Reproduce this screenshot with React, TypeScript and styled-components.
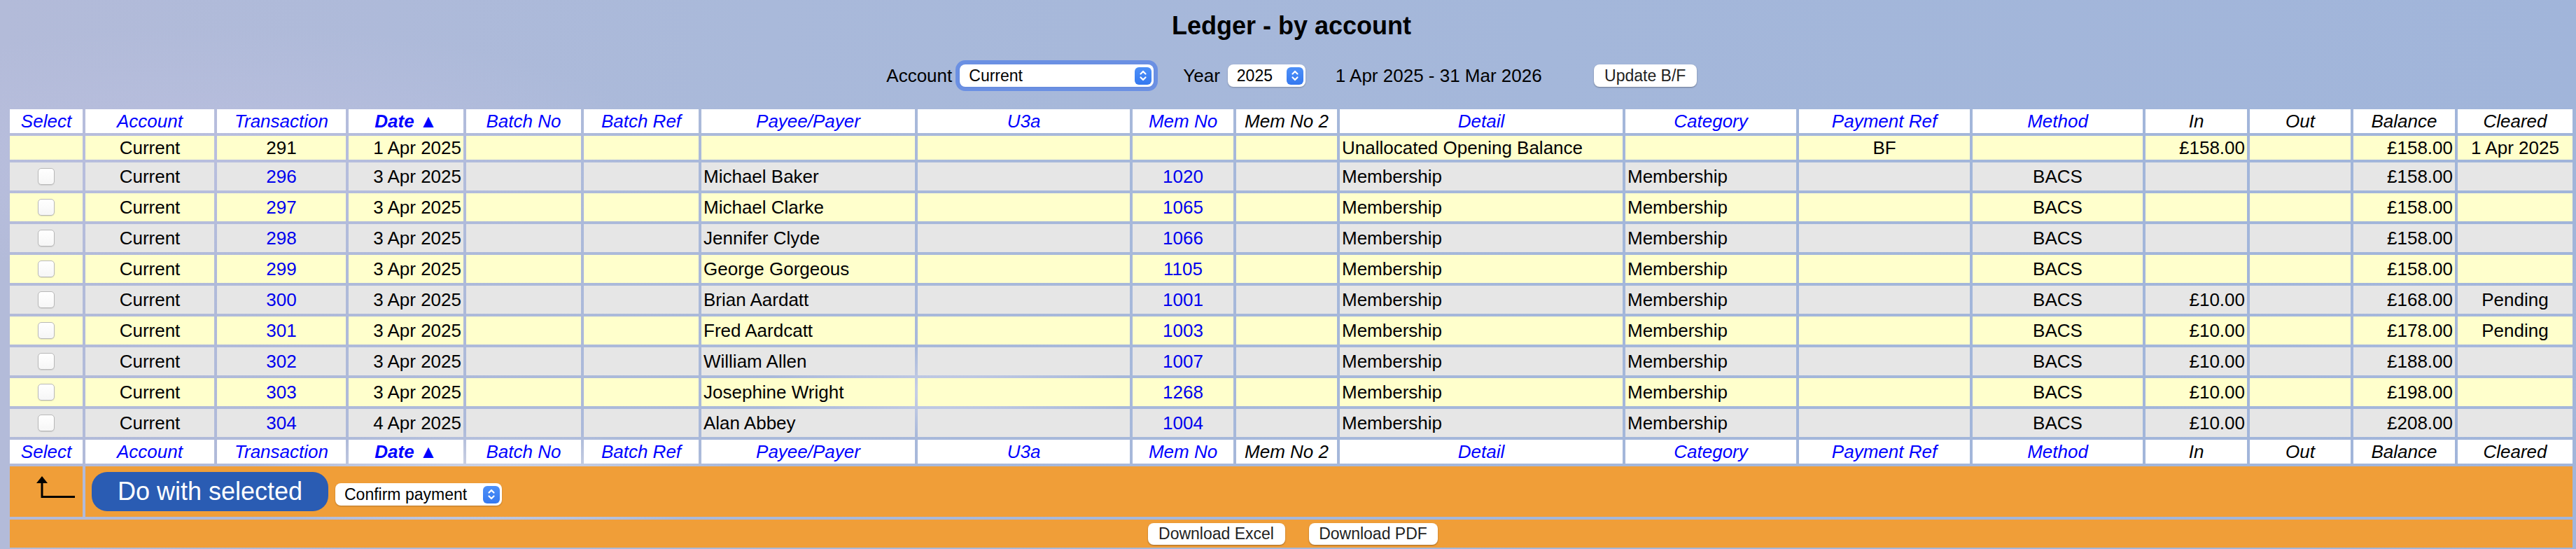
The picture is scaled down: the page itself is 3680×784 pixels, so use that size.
import React from "react";
import styled, { createGlobalStyle } from "styled-components";

const GlobalStyle = createGlobalStyle`
  html, body { margin: 0; padding: 0; }
  body {
    width: 3680px;
    height: 784px;
    overflow: hidden;
    font-family: "Liberation Sans", Arial, Helvetica, sans-serif;
    color: #000;
    background:
      radial-gradient(ellipse 520px 110px at 700px 690px, rgba(255, 248, 244, 0.55), rgba(255,255,255,0) 70%),
      radial-gradient(ellipse 380px 90px at 1350px 560px, rgba(235, 232, 245, 0.5), rgba(255,255,255,0) 70%),
      radial-gradient(ellipse 900px 260px at 320px 220px, rgba(192, 194, 226, 0.55), rgba(255,255,255,0) 70%),
      radial-gradient(ellipse 600px 200px at 3500px 500px, rgba(170, 186, 222, 0.6), rgba(255,255,255,0) 70%),
      linear-gradient(90deg, #b3bbd9 0%, #a9b9da 30%, #a4b7da 60%, #a1b5da 100%);
  }
`;

const Page = styled.div`
  padding: 16px 0 0 10px;
  width: 3670px;
`;

const Title = styled.h1`
  margin: 0;
  height: 42px;
  line-height: 42px;
  font-size: 36px;
  font-weight: bold;
  text-align: center;
`;

const Controls = styled.div`
  margin-top: 28px;
  height: 44px;
  display: flex;
  align-items: center;
  justify-content: center;
  font-size: 26px;
`;

const Label = styled.span<{ $gapAfter: number; $gapBefore?: number }>`
  margin-right: ${(p) => p.$gapAfter}px;
  margin-left: ${(p) => p.$gapBefore ?? 0}px;
  white-space: nowrap;
`;

const SelectBox = styled.div<{ $w: number; $focus?: boolean; $drop?: number }>`
  display: inline-flex;
  align-items: center;
  box-sizing: border-box;
  width: ${(p) => p.$w}px;
  height: 32px;
  margin-top: ${(p) => p.$drop ?? 0}px;
  padding: 0 3px 0 13px;
  background: #fff;
  border-radius: 8px;
  box-shadow: ${(p) =>
    p.$focus
      ? "0 0 0 6px rgba(96, 136, 228, 0.85), 0 1px 2px rgba(0,0,0,0.25)"
      : "0 1px 2px rgba(0,0,0,0.25)"};
`;

const NativeSelect = styled.select`
  appearance: none;
  -webkit-appearance: none;
  flex: 1;
  min-width: 0;
  border: none;
  outline: none;
  background: transparent;
  padding: 0;
  margin: 0;
  font-family: "Liberation Sans", Arial, sans-serif;
  font-size: 23px;
  color: #000;
`;

const Stepper = styled.span`
  flex: none;
  width: 24px;
  height: 25px;
  border-radius: 6px;
  background: linear-gradient(#4d90f8, #3478f0);
  display: flex;
  align-items: center;
  justify-content: center;
`;

const PlainButton = styled.button<{ $w: number; $h?: number }>`
  box-sizing: border-box;
  width: ${(p) => p.$w}px;
  height: ${(p) => p.$h ?? 32}px;
  padding: 0;
  border: none;
  border-radius: 8px;
  background: #fff;
  color: #222;
  font-family: "Liberation Sans", Arial, sans-serif;
  font-size: 23px;
  box-shadow: 0 1px 2px rgba(0, 0, 0, 0.35);
`;

const Table = styled.table`
  margin-top: 22px;
  border-collapse: separate;
  border-spacing: 4px;
  table-layout: fixed;
  width: 3669px;
  font-size: 26px;
`;

type Tone = "white" | "yellow" | "gray" | "orange";
const toneColor: Record<Tone, string> = {
  white: "#ffffff",
  yellow: "#ffffcc",
  gray: "#e6e6e6",
  orange: "#f09e38",
};

const Row = styled.tr<{ $tone: Tone; $h: number }>`
  height: ${(p) => p.$h}px;
  & > td,
  & > th {
    background: ${(p) => toneColor[p.$tone]};
  }
`;

const Th = styled.th<{ $black?: boolean; $bold?: boolean }>`
  padding: 0 2px;
  line-height: 30px;
  font-style: italic;
  font-weight: ${(p) => (p.$bold ? "bold" : "normal")};
  color: ${(p) => (p.$black ? "#000" : "#0000ff")};
  text-align: center;
  white-space: nowrap;
  overflow: hidden;
`;

const Td = styled.td<{ $align?: "left" | "center" | "right"; $link?: boolean }>`
  padding: 0 3px;
  line-height: 30px;
  text-align: ${(p) => p.$align ?? "left"};
  color: ${(p) => (p.$link ? "#0000ee" : "#000")};
  white-space: nowrap;
  overflow: hidden;
  vertical-align: middle;
`;

const Check = styled.input.attrs({ type: "checkbox" })`
  appearance: none;
  -webkit-appearance: none;
  display: block;
  margin: 0 auto;
  width: 24px;
  height: 24px;
  box-sizing: border-box;
  background: linear-gradient(#ffffff, #f6f6f6);
  border: 1px solid #b8b8b8;
  border-radius: 5px;
  box-shadow: 0 1px 1px rgba(0, 0, 0, 0.1);
`;

const ArrowCell = styled.td`
  padding: 14px 0 0 36px;
  vertical-align: top;
`;

const ActionCell = styled.td`
  padding: 0 0 0 9px;
  vertical-align: middle;
`;

const ActionBar = styled.div`
  display: flex;
  align-items: center;
  gap: 10px;
`;

const PrimaryButton = styled.button`
  box-sizing: border-box;
  width: 338px;
  height: 56px;
  padding: 0;
  border: none;
  border-radius: 22px;
  background: #2a5cb3;
  color: #fff;
  font-family: "Liberation Sans", Arial, sans-serif;
  font-size: 36px;
`;

const DownloadCell = styled.td`
  padding: 0;
  vertical-align: middle;
`;

const DownloadBar = styled.div`
  display: flex;
  justify-content: center;
  gap: 34px;
  padding-left: 4px;
`;

const StepperIcon = () => (
  <svg width="12" height="18" viewBox="0 0 12 18" fill="none" stroke="#fff" strokeWidth="2.2" strokeLinecap="round" strokeLinejoin="round">
    <polyline points="2.5,6.5 6,3 9.5,6.5" />
    <polyline points="2.5,11.5 6,15 9.5,11.5" />
  </svg>
);

const ReturnArrow = () => (
  <svg width="58" height="32" viewBox="0 0 58 32" fill="none">
    <polygon points="10,0 2,10 18,10" fill="#000" />
    <path d="M10 9 V29.5 H57" stroke="#000" strokeWidth="3" />
  </svg>
);

type Header = { label: string; black?: boolean; bold?: boolean };
const headers: Header[] = [
  { label: "Select" },
  { label: "Account" },
  { label: "Transaction" },
  { label: "Date \u25B2", bold: true },
  { label: "Batch No" },
  { label: "Batch Ref" },
  { label: "Payee/Payer" },
  { label: "U3a" },
  { label: "Mem No" },
  { label: "Mem No 2", black: true },
  { label: "Detail" },
  { label: "Category" },
  { label: "Payment Ref" },
  { label: "Method" },
  { label: "In", black: true },
  { label: "Out", black: true },
  { label: "Balance", black: true },
  { label: "Cleared", black: true },
];

const widths = [104, 184, 184, 164, 164, 164, 305, 303, 144, 144, 404, 244, 244, 243, 145, 144, 145, 164];

type Entry = {
  tx: string;
  date: string;
  payee: string;
  mem: string;
  detail: string;
  category: string;
  ref: string;
  method: string;
  inAmt: string;
  balance: string;
  cleared: string;
  selectable: boolean;
};

const member = (tx: string, date: string, payee: string, mem: string, inAmt: string, balance: string, cleared = ""): Entry => ({
  tx,
  date,
  payee,
  mem,
  detail: "Membership",
  category: "Membership",
  ref: "",
  method: "BACS",
  inAmt,
  balance,
  cleared,
  selectable: true,
});

const entries: Entry[] = [
  {
    tx: "291",
    date: "1 Apr 2025",
    payee: "",
    mem: "",
    detail: "Unallocated Opening Balance",
    category: "",
    ref: "BF",
    method: "",
    inAmt: "£158.00",
    balance: "£158.00",
    cleared: "1 Apr 2025",
    selectable: false,
  },
  member("296", "3 Apr 2025", "Michael Baker", "1020", "", "£158.00"),
  member("297", "3 Apr 2025", "Michael Clarke", "1065", "", "£158.00"),
  member("298", "3 Apr 2025", "Jennifer Clyde", "1066", "", "£158.00"),
  member("299", "3 Apr 2025", "George Gorgeous", "1105", "", "£158.00"),
  member("300", "3 Apr 2025", "Brian Aardatt", "1001", "£10.00", "£168.00", "Pending"),
  member("301", "3 Apr 2025", "Fred Aardcatt", "1003", "£10.00", "£178.00", "Pending"),
  member("302", "3 Apr 2025", "William Allen", "1007", "£10.00", "£188.00"),
  member("303", "3 Apr 2025", "Josephine Wright", "1268", "£10.00", "£198.00"),
  member("304", "4 Apr 2025", "Alan Abbey", "1004", "£10.00", "£208.00"),
];

const HeaderRow = () => (
  <Row $tone="white" $h={34}>
    {headers.map((h) => (
      <Th key={h.label} $black={h.black} $bold={h.bold}>
        {h.label}
      </Th>
    ))}
  </Row>
);

export default function App() {
  return (
    <>
      <GlobalStyle />
      <Page>
        <Title>Ledger - by account</Title>
        <Controls>
          <Label $gapAfter={11}>Account</Label>
          <SelectBox $w={277} $focus>
            <NativeSelect defaultValue="Current">
              <option>Current</option>
            </NativeSelect>
            <Stepper>
              <StepperIcon />
            </Stepper>
          </SelectBox>
          <Label $gapBefore={42} $gapAfter={11}>
            Year
          </Label>
          <SelectBox $w={111}>
            <NativeSelect defaultValue="2025">
              <option>2025</option>
            </NativeSelect>
            <Stepper>
              <StepperIcon />
            </Stepper>
          </SelectBox>
          <Label $gapBefore={43} $gapAfter={74}>
            1 Apr 2025 - 31 Mar 2026
          </Label>
          <PlainButton $w={147}>Update B/F</PlainButton>
        </Controls>

        <Table>
          <colgroup>
            {widths.map((w, i) => (
              <col key={i} style={{ width: w }} />
            ))}
          </colgroup>
          <thead>
            <HeaderRow />
          </thead>
          <tbody>
            {entries.map((e, i) => (
              <Row key={e.tx} $tone={i % 2 === 0 ? "yellow" : "gray"} $h={e.selectable ? 40 : 34}>
                <Td $align="center">{e.selectable && <Check />}</Td>
                <Td $align="center">Current</Td>
                <Td $align="center" $link={e.selectable}>
                  {e.tx}
                </Td>
                <Td $align="right">{e.date}</Td>
                <Td />
                <Td />
                <Td>{e.payee}</Td>
                <Td />
                <Td $align="center" $link>
                  {e.mem}
                </Td>
                <Td />
                <Td>{e.detail}</Td>
                <Td>{e.category}</Td>
                <Td $align="center">{e.ref}</Td>
                <Td $align="center">{e.method}</Td>
                <Td $align="right">{e.inAmt}</Td>
                <Td $align="right" />
                <Td $align="right">{e.balance}</Td>
                <Td $align="center">{e.cleared}</Td>
              </Row>
            ))}
          </tbody>
          <tfoot>
            <HeaderRow />
            <Row $tone="orange" $h={72}>
              <ArrowCell>
                <ReturnArrow />
              </ArrowCell>
              <ActionCell colSpan={17}>
                <ActionBar>
                  <PrimaryButton>Do with selected</PrimaryButton>
                  <SelectBox $w={238} $drop={8}>
                    <NativeSelect defaultValue="Confirm payment">
                      <option>Confirm payment</option>
                    </NativeSelect>
                    <Stepper>
                      <StepperIcon />
                    </Stepper>
                  </SelectBox>
                </ActionBar>
              </ActionCell>
            </Row>
            <Row $tone="orange" $h={40}>
              <DownloadCell colSpan={18}>
                <DownloadBar>
                  <PlainButton $w={196} $h={31}>
                    Download Excel
                  </PlainButton>
                  <PlainButton $w={184} $h={31}>
                    Download PDF
                  </PlainButton>
                </DownloadBar>
              </DownloadCell>
            </Row>
          </tfoot>
        </Table>
      </Page>
    </>
  );
}
